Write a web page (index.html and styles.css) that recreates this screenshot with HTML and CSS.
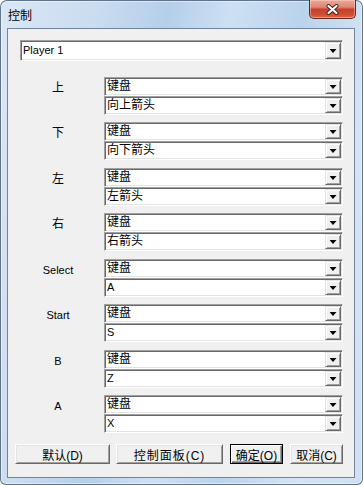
FILE: index.html
```html
<!DOCTYPE html>
<html>
<head>
    <meta charset="utf-8">
    <title>控制</title>
    <link rel="stylesheet" href="styles.css">
</head>
<body>

<div class="window">
    <div class="titlebar">
        <span class="title">控制</span>
        <div class="close">
            <svg width="13" height="11" viewBox="0 0 13 11">
                <path d="M2.5 2 L10.5 9 M10.5 2 L2.5 9" stroke="#4a1a14" stroke-width="4" stroke-linecap="round"/>
                <path d="M2.5 2 L10.5 9 M10.5 2 L2.5 9" stroke="#fff" stroke-width="2.2" stroke-linecap="round"/>
            </svg>
        </div>
    </div>

    <div class="client">
        <div class="combo player"><span class="value en">Player 1</span><span class="drop"></span></div>

        <div class="rows">
            <div class="row">
                <div class="label">上</div>
                <div class="pair">
                    <div class="combo"><span class="value">键盘</span><span class="drop"></span></div>
                    <div class="combo"><span class="value">向上箭头</span><span class="drop"></span></div>
                </div>
            </div>
            <div class="row">
                <div class="label">下</div>
                <div class="pair">
                    <div class="combo"><span class="value">键盘</span><span class="drop"></span></div>
                    <div class="combo"><span class="value">向下箭头</span><span class="drop"></span></div>
                </div>
            </div>
            <div class="row">
                <div class="label">左</div>
                <div class="pair">
                    <div class="combo"><span class="value">键盘</span><span class="drop"></span></div>
                    <div class="combo"><span class="value">左箭头</span><span class="drop"></span></div>
                </div>
            </div>
            <div class="row">
                <div class="label">右</div>
                <div class="pair">
                    <div class="combo"><span class="value">键盘</span><span class="drop"></span></div>
                    <div class="combo"><span class="value">右箭头</span><span class="drop"></span></div>
                </div>
            </div>
            <div class="row">
                <div class="label en">Select</div>
                <div class="pair">
                    <div class="combo"><span class="value">键盘</span><span class="drop"></span></div>
                    <div class="combo"><span class="value en">A</span><span class="drop"></span></div>
                </div>
            </div>
            <div class="row">
                <div class="label en">Start</div>
                <div class="pair">
                    <div class="combo"><span class="value">键盘</span><span class="drop"></span></div>
                    <div class="combo"><span class="value en">S</span><span class="drop"></span></div>
                </div>
            </div>
            <div class="row">
                <div class="label en">B</div>
                <div class="pair">
                    <div class="combo"><span class="value">键盘</span><span class="drop"></span></div>
                    <div class="combo"><span class="value en">Z</span><span class="drop"></span></div>
                </div>
            </div>
            <div class="row">
                <div class="label en">A</div>
                <div class="pair">
                    <div class="combo"><span class="value">键盘</span><span class="drop"></span></div>
                    <div class="combo"><span class="value en">X</span><span class="drop"></span></div>
                </div>
            </div>
        </div>

        <div class="buttons">
            <div class="btn btn-default-w">默认(D)</div>
            <div class="btn btn-panel">控制面板(C)</div>
            <div class="btn btn-small is-default">确定(O)</div>
            <div class="btn btn-small">取消(C)</div>
        </div>
    </div>
</div>

</body>
</html>
```

FILE: styles.css
```css
body { margin: 0; background-color: #fff; font-family: "Liberation Sans", "Noto Sans CJK SC", sans-serif; font-size: 12px; color: #000;
}

.window { width: 363px; height: 485px; box-sizing: border-box; border-radius: 7px 7px 6px 6px; overflow: hidden; display: flex; flex-direction: column;
    background: linear-gradient(100deg, #dae7f5 0%, #cadcf0 22%, #b5cfea 38%, #cde0f3 52%, #bad3ec 68%, #d4e4f4 85%, #cfe0f3 100%);
    box-shadow: inset 0 0 0 1px #62748a, inset 0 0 0 2px rgba(255, 255, 255, 0.45);
}

.titlebar { height: 28px; display: flex; justify-content: space-between; align-items: center; padding-left: 8px; padding-right: 7px;
}

.title { font-family: "Noto Sans CJK SC", sans-serif; font-size: 12px; line-height: 14px; margin-top: 1px;
}

.close { align-self: flex-start; width: 47px; height: 19px; box-sizing: border-box; display: flex; justify-content: center; align-items: center; padding-top: 1px;
    border: 1px solid #6e2418; border-top: none; border-radius: 0 0 5px 5px;
    background: linear-gradient(#eaa999 0%, #dd8574 40%, #c5412a 52%, #cc4e34 80%, #d9674b 100%);
    box-shadow: inset 0 0 0 1px rgba(255, 220, 210, 0.45);
}

.close svg { display: block;
}

.client { margin: 0 8px 0 7px; height: 450px; box-sizing: border-box; border: 1px solid #71849c; background-color: #f0f0f0; padding: 11px 11px 0 7px;
}

.combo { height: 19px; box-sizing: border-box; display: flex; align-items: stretch; background-color: #fff;
    border: 1px solid; border-color: #a0a0a0 #fff #fff #a0a0a0;
    box-shadow: inset 1px 1px 0 #696969, inset -1px -1px 0 #e3e3e3;
}

.combo .value { flex: 1; display: flex; align-items: center; padding-left: 2px; line-height: 15px; white-space: nowrap; overflow: hidden;
}

.en { font-size: 11px;
}

.drop { width: 16px; margin: 1px; box-sizing: border-box; display: flex; justify-content: center; align-items: center; background-color: #f0f0f0;
    border: 1px solid; border-color: #e3e3e3 #696969 #696969 #e3e3e3;
    box-shadow: inset 1px 1px 0 #fff, inset -1px -1px 0 #a0a0a0;
}

.drop::after { content: ""; width: 7px; height: 4px; margin-top: 1px; background-color: #000; clip-path: polygon(0 0, 100% 0, 50% 100%);
}

.player { height: 21px; margin-left: 5px;
}

.rows { margin-top: 16px; margin-left: 5px;
}

.row { display: flex; gap: 8px;
}

.row:nth-child(even) { margin-top: 7px;
}

.row:nth-child(odd):not(:first-child) { margin-top: 8px;
}

.label { width: 76px; text-align: center; line-height: 19px; padding-top: 2px;
}

.label.en { font-size: 11px;
}

.pair { flex: 1;
}

.buttons { display: flex; gap: 7px; margin-top: 11px;
}

.btn { height: 20px; box-sizing: border-box; display: flex; justify-content: center; align-items: center; background-color: #f0f0f0; font-size: 12px;
    border: 1px solid; border-color: #fff #696969 #696969 #fff;
    box-shadow: inset 1px 1px 0 #e3e3e3, inset -1px -1px 0 #a0a0a0;
}

.btn-default-w { width: 95px; margin-right: -1px;
}

.btn-panel { width: 107px; letter-spacing: 1px;
}

.btn-small { width: 53px;
}

.btn.is-default { border: 1px solid #000; box-shadow: inset 1px 1px 0 #fff, inset -1px -1px 0 #696969, inset -2px -2px 0 #a0a0a0;
}
```
